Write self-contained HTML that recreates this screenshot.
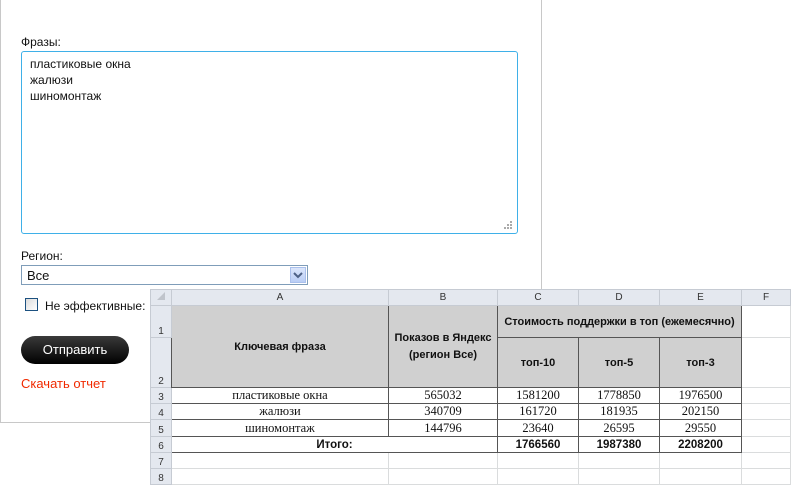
<!DOCTYPE html>
<html><head><meta charset="utf-8">
<style>
*{box-sizing:border-box;margin:0;padding:0}
body{width:800px;height:493px;background:#fff;position:relative;overflow:hidden;font-family:"Liberation Sans","DejaVu Sans",sans-serif;font-size:12px;color:#111}
.a{position:absolute}
.box{left:0;top:-2px;width:542px;height:425px;border:1px solid #c8c8c8;border-top:none}
.ta{left:21px;top:51px;width:497px;height:183px;border:1px solid #3fb0e8;border-radius:3px;padding:4px 8px;line-height:16px;font-size:12px}
.sel{left:21px;top:265px;width:287px;height:20px;border:1px solid #7f9db9;padding:2px 5px;font-size:13px}
.arr{right:1px;top:1px;width:16px;height:16px;background:linear-gradient(#dbe6fb,#b9cdf5);border:1px solid #aac0ec}
.cb{left:25px;top:298px;width:13px;height:13px;border:1px solid #1c5180;background:linear-gradient(135deg,#dcdcdc,#fff)}
.btn{left:21px;top:336px;width:108px;height:28px;border-radius:14px;background:linear-gradient(#3a3a3a,#000);color:#fff;font-size:13px;text-align:center;line-height:28px}
.link{left:21px;top:376px;color:#f02a00;font-size:13px}
.sheet{left:150px;top:289px;width:641px;height:196px;background:#fff}
table{border-collapse:collapse;table-layout:fixed;position:absolute;left:0;top:0}
td{border:1px solid #dadcdd;padding:0;text-align:center;font-size:11px;overflow:hidden;white-space:nowrap}
td.h{background:#e4e8ef;color:#333;font-size:10px;border-color:#c6cbd3}
td.rn{background:#e4e8ef;color:#333;font-size:10px;border-color:#c6cbd3;vertical-align:bottom;text-align:center}
td.g{background:#d0d0d0;font-weight:bold;border:1px solid #555;font-size:11px}
td.d{border:1px solid #555;font-family:"Liberation Serif",serif;font-size:12.5px}
td.b{border:1px solid #555;font-weight:bold;font-size:11.5px}
</style></head><body>
<div class="a box"></div>
<div class="a" style="left:21px;top:35px;font-size:12px">Фразы:</div>
<div class="a ta">пластиковые окна<br>жалюзи<br>шиномонтаж
<svg class="a" style="right:4px;bottom:3px" width="10" height="10"><g fill="#aaa"><rect x="7" y="1" width="2" height="2"/><rect x="4" y="4" width="2" height="2"/><rect x="7" y="4" width="2" height="2"/><rect x="1" y="7" width="2" height="2"/><rect x="4" y="7" width="2" height="2"/><rect x="7" y="7" width="2" height="2"/></g></svg></div>
<div class="a" style="left:21px;top:249px">Регион:</div>
<div class="a sel">Все<div class="a arr"><svg width="14" height="14"><path d="M3 5 L7 9 L11 5" stroke="#4d6185" stroke-width="2" fill="none"/></svg></div></div>
<div class="a cb"></div>
<div class="a" style="left:45px;top:299px;font-size:12px">Не эффективные:</div>
<div class="a btn">Отправить</div>
<div class="a link">Скачать отчет</div>
<div class="a sheet">
<table>
<colgroup><col style="width:21px"><col style="width:217px"><col style="width:109px"><col style="width:81px"><col style="width:81px"><col style="width:82px"><col style="width:49px"></colgroup>
<tr style="height:16px"><td class="h" style="background:#e4e8ef"><svg width="10" height="10"><path d="M9 1 L9 9 L1 9Z" fill="#c0c4cb"/></svg></td><td class="h">A</td><td class="h">B</td><td class="h">C</td><td class="h">D</td><td class="h">E</td><td class="h">F</td></tr>
<tr style="height:32px"><td class="rn">1</td><td class="g" rowspan="2">Ключевая фраза</td><td class="g" rowspan="2" style="line-height:17px">Показов в Яндекс<br>(регион Все)</td><td class="g" colspan="3">Стоимость поддержки в топ (ежемесячно)</td><td></td></tr>
<tr style="height:50px"><td class="rn">2</td><td class="g">топ-10</td><td class="g">топ-5</td><td class="g">топ-3</td><td></td></tr>
<tr style="height:16px"><td class="rn">3</td><td class="d">пластиковые окна</td><td class="d">565032</td><td class="d">1581200</td><td class="d">1778850</td><td class="d">1976500</td><td></td></tr>
<tr style="height:16px"><td class="rn">4</td><td class="d">жалюзи</td><td class="d">340709</td><td class="d">161720</td><td class="d">181935</td><td class="d">202150</td><td></td></tr>
<tr style="height:17px"><td class="rn">5</td><td class="d">шиномонтаж</td><td class="d">144796</td><td class="d">23640</td><td class="d">26595</td><td class="d">29550</td><td></td></tr>
<tr style="height:16px"><td class="rn">6</td><td class="b" colspan="2">Итого:</td><td class="b">1766560</td><td class="b">1987380</td><td class="b">2208200</td><td></td></tr>
<tr style="height:16px"><td class="rn">7</td><td></td><td></td><td></td><td></td><td></td><td></td></tr>
<tr style="height:16px"><td class="rn">8</td><td></td><td></td><td></td><td></td><td></td><td></td></tr>
</table>
</div>
</body></html>
